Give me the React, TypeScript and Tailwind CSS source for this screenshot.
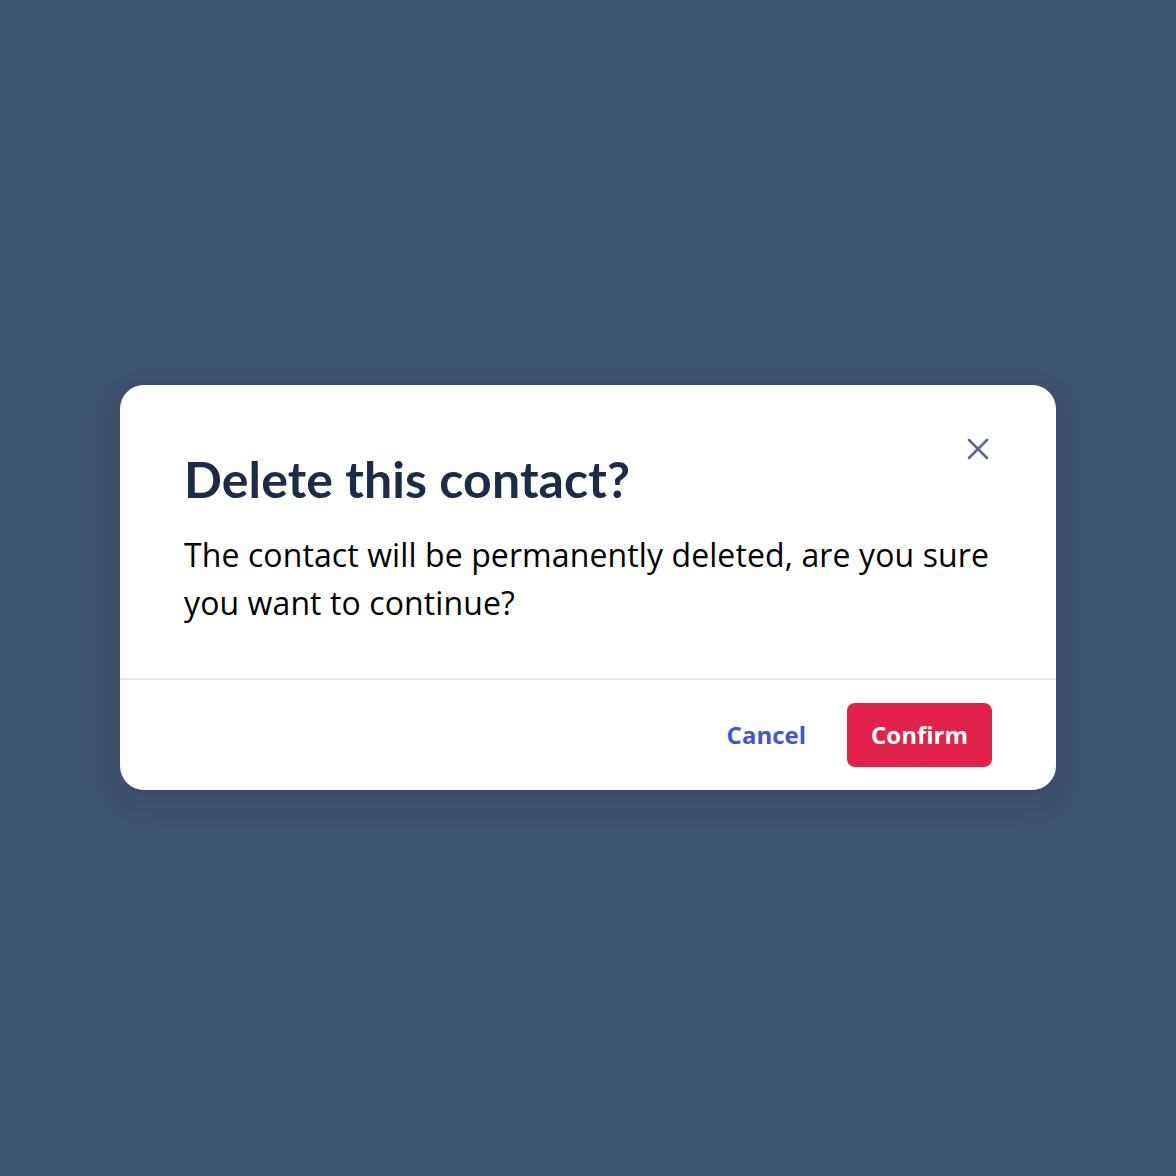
import React from 'react';

const App: React.FC = () => {
  return (
    <div className="w-full h-[1176px] bg-[#3f5372] flex items-center justify-center">
      <div className="w-[936px] bg-white rounded-[24px] shadow-[0_10px_30px_rgba(0,0,0,0.12)] -mt-[1px]">
        <div className="relative px-16 pt-[66px] pb-[51px]">
          <h2 className="font-['Lato',sans-serif] font-bold text-[50px] leading-[56px] text-[#1c2b4a] tracking-[0.1px]">
            Delete this contact?
          </h2>
          <p className="mt-[24px] font-['Open_Sans',sans-serif] text-[32px] leading-[48px] tracking-[0.1px] text-black">
            The contact will be permanently deleted, are you sure you want to continue?
          </p>
          <button className="absolute top-[50px] right-[64px] w-[28px] h-[28px] flex items-center justify-center text-[#5b6b85]">
            <svg width="24" height="24" viewBox="0 0 24 24" fill="none" stroke="currentColor" strokeWidth="2.6" strokeLinecap="round">
              <path d="M3 3L21 21M21 3L3 21" />
            </svg>
          </button>
        </div>
        <div className="border-t-2 border-[#e5e7eb] flex items-center justify-end gap-[41px] px-16 pt-[23px] pb-[23px]">
          <button className="font-['Open_Sans',sans-serif] font-bold text-[24px] text-[#4454cf]">Cancel</button>
          <button className="h-[64px] px-6 rounded-[8px] bg-[#e2224a] font-['Open_Sans',sans-serif] font-bold text-[24px] text-white">
            Confirm
          </button>
        </div>
      </div>
    </div>
  );
};

export default App;
